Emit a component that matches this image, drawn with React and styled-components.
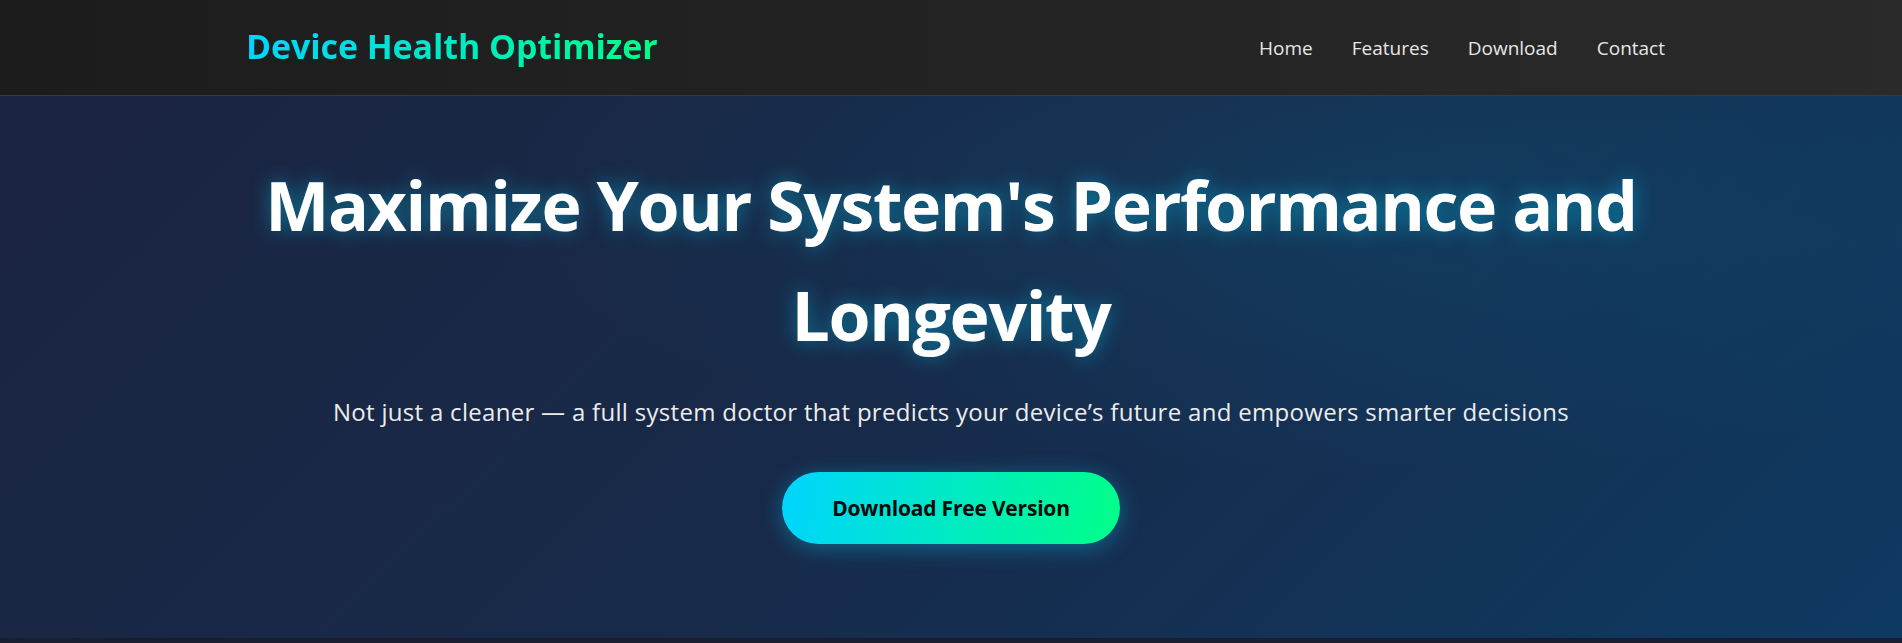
import React from "react";
import styled, { createGlobalStyle } from "styled-components";

const GlobalStyle = createGlobalStyle`
  * { box-sizing: border-box; }
  html, body { margin: 0; padding: 0; }
  body {
    font-family: "Open Sans", "Noto Sans", sans-serif;
    background: #1a1c30;
    color: #ffffff;
    overflow: hidden;
  }
`;

const Header = styled.header`
  height: 96px;
  background: linear-gradient(90deg, #1c1c1c 0%, #2a2a2a 100%);
  border-bottom: 1px solid #3a3a3a;
`;

const HeaderInner = styled.div`
  height: 100%;
  display: flex;
  align-items: center;
  justify-content: space-between;
  padding: 0 237px 0 246px;
`;

const Logo = styled.div`
  font-size: 34px;
  font-weight: 700;
  letter-spacing: -0.1px;
  background: linear-gradient(90deg, #00d4ff 0%, #00ff88 100%);
  -webkit-background-clip: text;
  background-clip: text;
  color: transparent;
  line-height: 1;
  padding-bottom: 4px;
`;

const Nav = styled.nav`
  display: flex;
  gap: 39px;
`;

const NavLink = styled.a`
  color: #e6e6e6;
  font-size: 19px;
  text-decoration: none;
  cursor: pointer;
`;

const Hero = styled.section`
  height: 542px;
  padding-top: 54px;
  text-align: center;
  background:
    radial-gradient(ellipse at 72% 18%, rgba(0, 180, 220, 0.1) 0%, transparent 45%),
    linear-gradient(135deg, #1b2440 0%, #172a4a 50%, #0e3a62 100%);
`;

const Title = styled.h1`
  margin: 0 auto;
  max-width: 1440px;
  font-size: 68px;
  letter-spacing: -1.4px;
  line-height: 110px;
  font-weight: 700;
  color: #ffffff;
  text-shadow: 0 0 20px rgba(0, 212, 255, 0.45);
`;

const Subtitle = styled.p`
  margin: 23px 0 0;
  font-size: 24px;
  letter-spacing: 0.3px;
  line-height: 38px;
  color: #ececec;
`;

const CTA = styled.button`
  margin-top: 41px;
  height: 72px;
  padding: 0 50px;
  border: none;
  border-radius: 40px;
  font-family: inherit;
  font-size: 21px;
  letter-spacing: -0.2px;
  font-weight: 700;
  color: #0a0a0a;
  background: linear-gradient(100deg, #00d4ff 0%, #00ff88 100%);
  box-shadow: 0 4px 22px rgba(0, 212, 255, 0.35);
  cursor: pointer;
`;

const NextSection = styled.section`
  height: 5px;
  background: #1a1c30;
`;

export default function App() {
  return (
    <>
      <GlobalStyle />
      <Header>
        <HeaderInner>
          <Logo>Device Health Optimizer</Logo>
          <Nav>
            <NavLink>Home</NavLink>
            <NavLink>Features</NavLink>
            <NavLink>Download</NavLink>
            <NavLink>Contact</NavLink>
          </Nav>
        </HeaderInner>
      </Header>
      <Hero>
        <Title>Maximize Your System's Performance and Longevity</Title>
        <Subtitle>
          Not just a cleaner — a full system doctor that predicts your device’s future and empowers smarter decisions
        </Subtitle>
        <CTA>Download Free Version</CTA>
      </Hero>
      <NextSection />
    </>
  );
}
